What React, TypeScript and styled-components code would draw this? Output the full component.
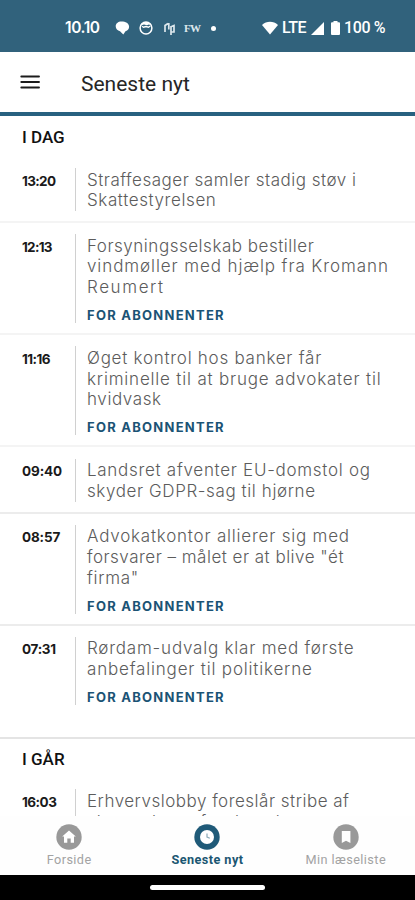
import React from "react";
import styled, { createGlobalStyle } from "styled-components";

const GlobalStyle = createGlobalStyle`
  * { box-sizing: border-box; }
  body { margin: 0; background: #fff; }
`;

const Screen = styled.div`
  display: flex;
  flex-direction: column;
  width: 415px;
  height: 900px;
  overflow: hidden;
  background: #fff;
  font-family: Inter, sans-serif;
`;

const StatusBar = styled.header`
  flex: none;
  display: flex;
  align-items: center;
  height: 52px;
  padding: 4px 29px 0 65px;
  background: #31627c;
  color: #fff;
`;

const StatusText = styled.span<{ $width: number; $tracking: number }>`
  width: ${(p) => p.$width}px;
  font: 500 16px/20px Roboto, sans-serif;
  letter-spacing: ${(p) => p.$tracking}px;
  white-space: nowrap;
`;

const Clock = styled.span`
  width: 50px;
  font: 600 15.5px/20px Inter, sans-serif;
  letter-spacing: -0.4px;
`;

const Notifications = styled.div`
  display: flex;
  align-items: center;
  flex: 1;
`;

const Signals = styled.div`
  display: flex;
  align-items: center;
`;

const StatusIcon = styled.svg<{ $gap: number }>`
  display: block;
  flex: none;
  margin-right: ${(p) => p.$gap}px;
`;

const FwMark = styled.span`
  width: 27px;
  font: 700 11px/16px "Liberation Serif", serif;
  letter-spacing: -0.8px;
  color: #dce7ec;
`;

const Dot = styled.span`
  width: 5px;
  height: 5px;
  border-radius: 50%;
  background: #fff;
`;

const AppBar = styled.div`
  flex: none;
  display: flex;
  align-items: center;
  height: 64px;
  padding-left: 20px;
  border-bottom: 4px solid #286180;
`;

const MenuButton = styled.button`
  display: flex;
  width: 61px;
  padding: 0;
  border: 0;
  background: none;
`;

const Title = styled.h1`
  margin: 4px 0 0;
  font: 400 21px/28px Roboto, sans-serif;
  color: #262626;
`;

const Feed = styled.main`
  flex: 1;
  min-height: 0;
  overflow: hidden;
`;

const SectionTitle = styled.h2<{ $ruled?: boolean }>`
  margin: 0;
  height: ${(p) => (p.$ruled ? 41.5 : 41)}px;
  padding: ${(p) => (p.$ruled ? 10 : 11)}px 0 0 22px;
  border-top: ${(p) => (p.$ruled ? "2px solid #e4e4e4" : "0")};
  font: 500 17px/20px Roboto, sans-serif;
  color: #111;
`;

const Row = styled.article<{ $last?: boolean; $faint?: boolean }>`
  display: flex;
  padding: 11.2px 0 ${(p) => (p.$last ? 31.5 : 10)}px 22px;
  border-bottom: ${(p) => (p.$last ? "0" : `2px solid ${p.$faint ? "#f4f4f4" : "#ececec"}`)};
`;

const Time = styled.time<{ $tracking: number }>`
  flex: none;
  width: 53px;
  padding-top: 2.5px;
  font: 700 13.5px/20.8px Inter, sans-serif;
  letter-spacing: ${(p) => p.$tracking}px;
  color: #1a1a1a;
`;

const Body = styled.div`
  border-left: 1px solid #d0d0d0;
  padding: 1.5px 0 0 11px;
`;

const Headline = styled.h3`
  margin: 0;
  font: 300 17px/20.7px Inter, sans-serif;
  color: #5c5c5c;
`;

const Line = styled.span<{ $tracking: number }>`
  display: block;
  white-space: nowrap;
  letter-spacing: ${(p) => p.$tracking}px;
`;

const Tag = styled.div`
  margin-top: 9.4px;
  font: 700 13px/16px Inter, sans-serif;
  letter-spacing: 1.25px;
  color: #1b5375;
`;

const TabBar = styled.nav`
  flex: none;
  display: grid;
  grid-template-columns: repeat(3, 1fr);
  height: 59px;
  background: #fefefe;
`;

const Tab = styled.a<{ $active?: boolean }>`
  display: flex;
  flex-direction: column;
  align-items: center;
  padding-top: 8px;
  color: ${(p) => (p.$active ? "#1b5672" : "#a3a3a3")};
  font: ${(p) => (p.$active ? 700 : 400)} 12.7px/16px Roboto, sans-serif;
  letter-spacing: 0.42px;
`;

const TabIcon = styled.svg`
  display: block;
  margin-bottom: 2px;
`;

const SystemBar = styled.footer`
  flex: none;
  display: flex;
  justify-content: center;
  height: 25px;
  padding-top: 10px;
  background: #000;
`;

const HomeHandle = styled.div`
  width: 115px;
  height: 5px;
  border-radius: 3px;
  background: #fff;
`;

type Item = {
  time: string;
  timeTracking: number;
  lines: [string, number][];
  tag?: boolean;
};

const today: Item[] = [
  { time: "13:20", timeTracking: -0.65, lines: [["Straffesager samler stadig støv i", 0.5], ["Skattestyrelsen", 0.6]] },
  { time: "12:13", timeTracking: -0.7, lines: [["Forsyningsselskab bestiller", 0.52], ["vindmøller med hjælp fra Kromann", 0.91], ["Reumert", 1.6]], tag: true },
  { time: "11:16", timeTracking: -0.55, lines: [["Øget kontrol hos banker får", 0.74], ["kriminelle til at bruge advokater til", 0.81], ["hvidvask", 0.6]], tag: true },
  { time: "09:40", timeTracking: -0.1, lines: [["Landsret afventer EU-domstol og", 0.71], ["skyder GDPR-sag til hjørne", 0.6]] },
  { time: "08:57", timeTracking: -0.15, lines: [["Advokatkontor allierer sig med", 0.79], ['forsvarer – målet er at blive "ét', 0.49], ['firma"', 0.7]], tag: true },
  { time: "07:31", timeTracking: -0.3, lines: [["Rørdam-udvalg klar med første", 0.79], ["anbefalinger til politikerne", 0.81]], tag: true },
];

const yesterday: Item = {
  time: "16:03",
  timeTracking: -0.5,
  lines: [["Erhvervslobby foreslår stribe af", 0.5], ["skærpelser af ophavsloven", 0.9]],
};

function NewsRow({ item, last, faint }: { item: Item; last?: boolean; faint?: boolean }) {
  return (
    <Row $last={last} $faint={faint}>
      <Time $tracking={item.timeTracking}>{item.time}</Time>
      <Body>
        <Headline>
          {item.lines.map(([text, tracking]) => (
            <Line key={text} $tracking={tracking}>{text}</Line>
          ))}
        </Headline>
        {item.tag && <Tag>FOR ABONNENTER</Tag>}
      </Body>
    </Row>
  );
}

export default function App() {
  return (
    <Screen>
      <GlobalStyle />
      <StatusBar>
        <Clock>10.10</Clock>
        <Notifications>
          <StatusIcon $gap={9} width="15" height="14" viewBox="0 0 15 14">
            <path d="M6.500 .5C3 .5 .7 2.600.7 5.300c0 2.600 1.800 4.300 4.300 4.900L8.300 13.500l2.200-3.300c2.400-.7 3.600-2.300 3.600-4.700C14.100 2.400 10.500.5 6.500.5z" fill="#fff" />
          </StatusIcon>
          <StatusIcon $gap={10} width="14" height="14" viewBox="0 0 14 14">
            <circle cx="7" cy="7" r="5.900" fill="none" stroke="#fff" strokeWidth="1.500" />
            <path d="M3 5.300L4.500 6.200 7 5.500 9.500 6.200 11.300 5" fill="none" stroke="#fff" strokeWidth="1.300" />
            <path d="M1.500 4.500C3.500-.2 10.500-.2 12.500 4.500L10 3.500 8 4.300 5 3.400z" fill="#fff" />
          </StatusIcon>
          <StatusIcon $gap={8} width="13" height="15" viewBox="0 0 13 15">
            <path d="M2 11V4.500L5 2.500M5.800 2v6.500M8 5v9M8.500 5.500L11 4.500V11H8.500" fill="none" stroke="#dce7ec" strokeWidth="1.700" />
          </StatusIcon>
          <FwMark>FW</FwMark>
          <Dot />
        </Notifications>
        <Signals>
          <StatusIcon $gap={4} width="16" height="14" viewBox="0 0 16 14">
            <path d="M0 4C4.500-.2 11.500-.2 16 4L8 13.500z" fill="#fff" />
          </StatusIcon>
          <StatusText $width={29} $tracking={-0.5}>LTE</StatusText>
          <StatusIcon $gap={7} width="13" height="13" viewBox="0 0 13 13">
            <path d="M13 0v13H0z" fill="#fff" />
          </StatusIcon>
          <StatusIcon $gap={4} width="9" height="14" viewBox="0 0 9 14">
            <path d="M2.500 0h4v1.300H8q1 0 1 1V13q0 1-1 1H1q-1 0-1-1V2.300q0-1 1-1h1.500z" fill="#fff" />
          </StatusIcon>
          <StatusText $width={42} $tracking={-0.35}>100 %</StatusText>
        </Signals>
      </StatusBar>

      <AppBar>
        <MenuButton aria-label="Menu">
          <svg width="20" height="14" viewBox="0 0 20 14">
            <path d="M1.300 1.500h17.700M1.300 7h17.700M1.300 12.500h17.700" stroke="#1c1c1c" strokeWidth="1.900" strokeLinecap="round" />
          </svg>
        </MenuButton>
        <Title>Seneste nyt</Title>
      </AppBar>

      <Feed>
        <SectionTitle>I DAG</SectionTitle>
        {today.map((item, i) => (
          <NewsRow key={item.time} item={item} faint={i < 3} last={i === today.length - 1} />
        ))}
        <SectionTitle $ruled>I GÅR</SectionTitle>
        <NewsRow item={yesterday} />
      </Feed>

      <TabBar>
        <Tab>
          <TabIcon width="26" height="26" viewBox="0 0 26 26">
            <circle cx="13" cy="13" r="12.700" fill="#999" />
            <path d="M13 6.500l6.800 6H18v6.200h-3.300v-4.200h-3.400v4.200H8v-6.200H6.200z" fill="#fff" />
          </TabIcon>
          Forside
        </Tab>
        <Tab $active>
          <TabIcon width="26" height="26" viewBox="0 0 26 26">
            <circle cx="13" cy="13" r="12.700" fill="#1f5a78" />
            <circle cx="13" cy="13" r="7" fill="#fff" />
            <path d="M13 9.500V13l2.800 1.200" fill="none" stroke="#8aa9b8" strokeWidth="1.200" />
          </TabIcon>
          Seneste nyt
        </Tab>
        <Tab>
          <TabIcon width="26" height="26" viewBox="0 0 26 26">
            <circle cx="13" cy="13" r="12.700" fill="#999" />
            <path d="M8.800 7h8.600v12L13 16.800 8.800 19z" fill="#fff" />
          </TabIcon>
          Min læseliste
        </Tab>
      </TabBar>
      <SystemBar>
        <HomeHandle />
      </SystemBar>
    </Screen>
  );
}
